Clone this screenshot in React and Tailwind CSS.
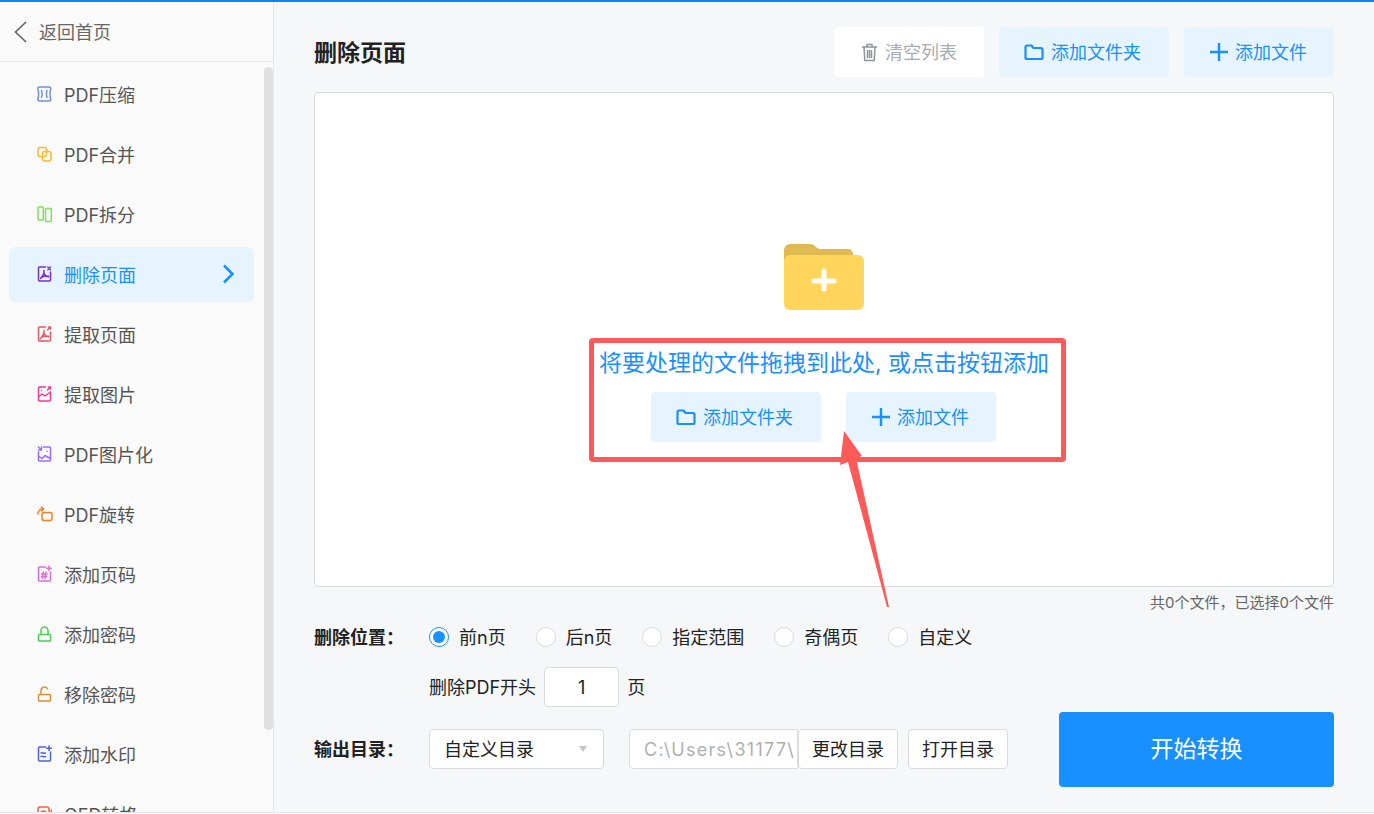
const font = { fontFamily: 'Inter, "Noto Sans CJK SC", sans-serif' };

function Ico({ color, children }) {
    return (
        <svg width="16" height="18" viewBox="0 0 16 18" fill="none" stroke={color} strokeWidth="1.500" strokeLinecap="round" strokeLinejoin="round" className="shrink-0">
            {children}
        </svg>
    );
}

// page outline with a notch in the top right corner
const page = "M8.500 2H2.500a1 1 0 0 0-1 1v12a1 1 0 0 0 1 1h10a1 1 0 0 0 1-1V7";
const acrobat = "M7 5.500c.3 3-1.500 6-3.500 8M7.200 9c1 1.500 2.500 2.500 4.300 2.800M3.800 13c2-2 4.500-2.300 7.700-1.800";

const menu = [
    { label: "PDF压缩", icon: <Ico color="#6f8fe0"><path d="M2.500 2h9.500c1.500 0 2 1 1.600 2.300-.8 2-.8 7 0 9.400.4 1.300-.1 2.300-1.600 2.300H2.500C1 16 .6 15 1 13.700c.8-2.400.8-7.400 0-9.400C.6 3 1 2 2.500 2z" /><path d="M4.500 5.500c.8 2 .8 5 0 7M10 5.500c-.8 2-.8 5 0 7" /></Ico> },
    { label: "PDF合并", icon: <Ico color="#fdb92c"><rect x="1" y="2.500" width="8.500" height="9" rx="2.200" /><rect x="5.500" y="6.500" width="8.500" height="9.500" rx="2.200" /></Ico> },
    { label: "PDF拆分", icon: <Ico color="#7ee35b"><rect x="1" y="2" width="5.300" height="13" rx=".8" /><rect x="8.500" y="3.500" width="5.800" height="13" rx=".8" /></Ico> },
    { label: "删除页面", active: true, icon: <Ico color="#7b2fd0"><path d={page} /><path d={acrobat} /><path d="M10.800 2l2.700 2.700M13.500 2l-2.700 2.700" /></Ico> },
    { label: "提取页面", icon: <Ico color="#e05a66"><path d={page} /><path d={acrobat} /><path d="M10.500 5l3-3M11.500 2h2v2" /></Ico> },
    { label: "提取图片", icon: <Ico color="#f03c96"><path d={page} /><path d="M10.500 5l3-3M11.500 2h2v2M1.500 12l3.500-3 3 2 5.500-4M4.500 5.500h.01" /></Ico> },
    { label: "PDF图片化", icon: <Ico color="#9a6cff"><path d="M6.500 2h6a1 1 0 0 1 1 1v12a1 1 0 0 1-1 1h-10a1 1 0 0 1-1-1V7" /><path d="M1.500 2l3 3M4.500 2v3h-3M1.500 11l3.500 2.500 3-3 5.500 3M10 6.500h.01" /></Ico> },
    { label: "PDF旋转", icon: <Ico color="#f5821f"><rect x="5" y="7.500" width="10" height="8" rx="2" /><path d="M.8 9c.4-3 2.500-5 5.200-5.200M4.300 2l2.200 1.800L4.800 6" /></Ico> },
    { label: "添加页码", icon: <Ico color="#d96fd6"><path d={page} /><path d="M12 1v4.500M9.800 3.200h4.500M6.300 7l-1 6.500M9 7l-1 6.500M4.500 9h5.500M4.300 11.500h5.500" /></Ico> },
    { label: "添加密码", icon: <Ico color="#4fc85a"><rect x="1.500" y="9.500" width="12" height="6.500" rx=".8" /><path d="M4 9.500V5.500a3.500 3.500 0 0 1 7 0v4" /></Ico> },
    { label: "移除密码", icon: <Ico color="#d9933a"><rect x="1.500" y="9.500" width="12" height="6.500" rx=".8" /><path d="M4 9.500V5.500a3.500 3.500 0 0 1 6.500-1.700" /></Ico> },
    { label: "添加水印", icon: <Ico color="#4a63e0"><path d={page} /><path d="M12 1v4.500M9.800 3.200h4.500M4 8c1.200-1 2.500 1 4.500 0M4 11.500c1.200-1 2.500 1 4.500 0" /></Ico> },
    { label: "OFD转格", icon: <Ico color="#f5643c"><rect x="1" y="2" width="11" height="14" rx="2" /><circle cx="6.500" cy="9" r="3" /><path d="M14.300 5v8" /></Ico> },
];

const radios = ["前n页", "后n页", "指定范围", "奇偶页", "自定义"];

function FolderIcon() {
    return (
        <svg width="20" height="17" viewBox="0 0 20 17" fill="none" stroke="currentColor" strokeWidth="2.200" strokeLinejoin="round" className="shrink-0">
            <path d="M1.500 3a1.500 1.500 0 0 1 1.500-1.500h4.500l2 2.500h7.500a1.500 1.500 0 0 1 1.500 1.500v8a1.500 1.500 0 0 1-1.500 1.500H3a1.500 1.500 0 0 1-1.500-1.500z" />
        </svg>
    );
}

function PlusIcon() {
    return (
        <svg width="18" height="18" viewBox="0 0 18 18" fill="none" stroke="currentColor" strokeWidth="2.400" className="shrink-0">
            <path d="M9 0v18M0 9h18" />
        </svg>
    );
}

function AddFolderButton() {
    return (
        <button className="flex items-center justify-center gap-[7px] pr-[3px] h-[50px] w-[170px] bg-[#e5f4fe] rounded-sm text-[18px] text-[#1890ff]">
            <FolderIcon />
            添加文件夹
        </button>
    );
}

function AddFileButton() {
    return (
        <button className="flex items-center justify-center gap-[7px] pr-[1px] w-[150px] h-[50px] bg-[#e5f4fe] rounded-sm text-[18px] text-[#1890ff]">
            <PlusIcon />
            添加文件
        </button>
    );
}

export default function App() {
    return (
        <div className="relative w-[1374px] h-[814px] overflow-hidden bg-white" style={font}>
            <div className="h-[2px] bg-[#0a84ff]"></div>
            <div className="flex h-[810px] border-b border-[#e4e6e8] box-content">
                <aside className="w-[274px] shrink-0 flex flex-col bg-[#fafafa] border-r border-[#e8e8e8]">
                    <div className="flex items-center h-[60px] border-b border-[#e6e6e6] shrink-0 text-[18px] text-[#666] pl-[14px] gap-[12px]">
                        <svg width="13" height="22" viewBox="0 0 13 22" fill="none" stroke="currentColor" strokeWidth="1.700" className="shrink-0">
                            <path d="M12 1L1.500 11 12 21" />
                        </svg>
                        <span className="pt-[2px]">返回首页</span>
                    </div>
                    <div className="flex flex-1 min-h-0">
                        <div className="w-[264px] overflow-hidden pt-[2px]">
                            {menu.map((item) => (
                                <div key={item.label} className="h-[60px] flex items-center px-[9px]">
                                    <div className={item.active
                                        ? "w-[245px] h-[55px] rounded-md bg-[#e6f4ff] flex items-center pl-[28px] text-[18px] text-[#1890ff]"
                                        : "w-[245px] h-[55px] flex items-center pl-[28px] text-[18px] text-[#555]"}>
                                        {item.icon}
                                        <span className="ml-[11px] pt-[2px] flex-1 whitespace-nowrap">{item.label}</span>
                                        {item.active && (
                                            <svg width="13" height="20" viewBox="0 0 13 20" fill="none" stroke="currentColor" strokeWidth="2.500" className="mr-[19px]">
                                                <path d="M2 1.500L10.500 10 2 18.500" />
                                            </svg>
                                        )}
                                    </div>
                                </div>
                            ))}
                        </div>
                        <div className="w-[9px] h-[663px] mt-[5px] bg-[#e0e0e0] rounded-md"></div>
                    </div>
                </aside>

                <main className="flex-1 bg-[#f5f7f8] px-[40px] text-[#222]">
                    <div className="flex items-center justify-between pt-[25px]">
                        <h1 className="text-[23px] pt-[2px] font-bold text-[#222]">删除页面</h1>
                        <div className="flex gap-[15px]">
                            <button className="flex items-center justify-center gap-[7px] w-[150px] h-[50px] bg-white rounded-sm text-[18px] text-[#a8abb0]">
                                <svg width="17" height="19" viewBox="0 0 17 19" fill="none" stroke="#8f9699" strokeWidth="1.500" className="shrink-0">
                                    <path d="M1 4h15M6 4V1.500h5V4M3 4l.8 13.500h9.400L14 4M6.500 7v8M8.500 7v8M10.500 7v8" />
                                </svg>
                                清空列表
                            </button>
                            <AddFolderButton />
                            <AddFileButton />
                        </div>
                    </div>

                    <div className="mt-[15px] h-[495px] bg-white border border-[#d9dbdd] rounded-sm flex flex-col items-center pt-[151px]">
                        <svg width="80" height="66" viewBox="0 0 80 66">
                            <path d="M0 6a6 6 0 0 1 6-6h20c3 0 4 1 6 3l3 2h29a5 5 0 0 1 5 5v10H0z" fill="#dfb952" />
                            <path d="M0 17a6 6 0 0 1 6-6h68a6 6 0 0 1 6 6v43a6 6 0 0 1-6 6H6a6 6 0 0 1-6-6z" fill="#ffd55c" />
                            <path d="M40 27v18M30 37h20" stroke="#fff" strokeWidth="5" strokeLinecap="round" />
                        </svg>
                        <p className="mt-[37px] text-[23px] leading-[32px] text-[#1890ff] whitespace-nowrap">将要处理的文件拖拽到此处, 或点击按钮添加</p>
                        <div className="flex gap-[25px] mt-[13px] pr-[1px]">
                            <AddFolderButton />
                            <AddFileButton />
                        </div>
                    </div>

                    <div className="mt-[7px] text-right text-[15px] leading-[18px] text-[#666]">共0个文件，已选择0个文件</div>

                    <div className="flex items-start justify-between mt-[12px]">
                        <div>
                            <div className="flex items-center h-[26px]">
                                <span className="w-[115px] text-[18px] font-bold whitespace-nowrap">删除位置：</span>
                                <div className="flex items-center gap-[30px]">
                                    {radios.map((r, i) => (
                                        <label key={r} className="flex items-center gap-[10px] text-[18px]">
                                            {i === 0
                                                ? <span className="w-[20px] h-[20px] rounded-full bg-white border border-[#1890ff] flex items-center justify-center"><span className="w-[12px] h-[12px] rounded-full bg-[#1890ff]"></span></span>
                                                : <span className="w-[20px] h-[20px] rounded-full bg-white border border-[#dcdcdc]"></span>}
                                            {r}
                                        </label>
                                    ))}
                                </div>
                            </div>
                            <div className="flex items-center ml-[115px] mt-[17px] text-[18px]">
                                <span>删除PDF开头</span>
                                <div className="w-[75px] h-[40px] ml-[8px] mr-[8px] bg-white border border-[#d9dbdd] rounded-sm flex items-center justify-center">1</div>
                                <span>页</span>
                            </div>
                            <div className="flex items-center mt-[22px]">
                                <span className="w-[115px] text-[18px] font-bold whitespace-nowrap">输出目录：</span>
                                <div className="flex items-center justify-between w-[175px] h-[40px] pl-[14px] pr-[16px] bg-white border border-[#d9dbdd] rounded-sm text-[18px]">
                                    自定义目录
                                    <span className="w-0 h-0 border-x-[4px] border-x-transparent border-t-[6px] border-t-[#c4c4c4]"></span>
                                </div>
                                <div className="ml-[25px] w-[169px] h-[40px] pl-[14px] bg-white border border-[#d9dbdd] rounded-l-sm flex items-center text-[18px] tracking-[1.300px] text-[#b0b0b0] overflow-hidden whitespace-nowrap">C:\Users\31177\</div>
                                <button className="w-[100px] h-[40px] bg-white border border-[#d9dbdd] rounded-sm text-[18px]">更改目录</button>
                                <button className="ml-[10px] w-[100px] h-[40px] bg-white border border-[#d9dbdd] rounded-sm text-[18px]">打开目录</button>
                            </div>
                        </div>
                        <button className="mt-[88px] w-[275px] h-[75px] bg-[#1890ff] rounded-sm text-white text-[23px]">开始转换</button>
                    </div>
                </main>
            </div>

            {/* annotation drawn over the screenshot */}
            <div className="absolute left-[589px] top-[338px] w-[477px] h-[124px] border-[5px] border-[#ff5a5a] rounded-sm"></div>
            <svg className="absolute left-[838px] top-[428px]" width="56" height="182" viewBox="838 428 56 182">
                <polygon points="844,431 862,456 856,458 889,607 887,607 848,462 840,465" fill="#ff5a5a" />
            </svg>
        </div>
    );
}
